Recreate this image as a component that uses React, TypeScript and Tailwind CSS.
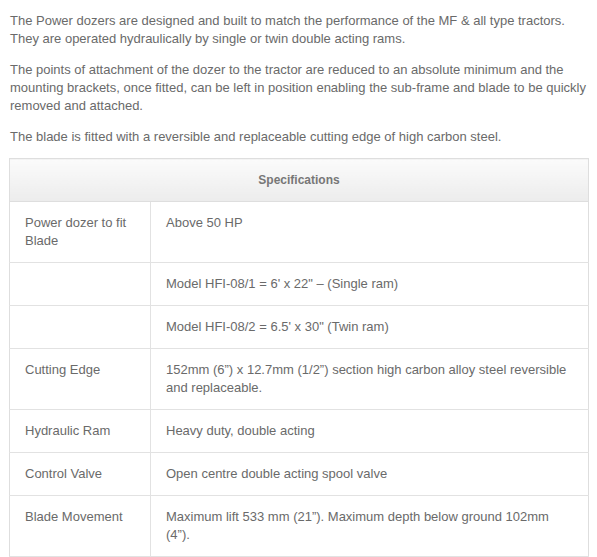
import React from 'react';

const rows: { label: string; value: string }[] = [
  { label: 'Power dozer to fit Blade', value: 'Above 50 HP' },
  { label: '', value: 'Model HFI-08/1 = 6\' x 22" \u2013 (Single ram)' },
  { label: '', value: 'Model HFI-08/2 = 6.5\' x 30" (Twin ram)' },
  {
    label: 'Cutting Edge',
    value: '152mm (6\u201d) x 12.7mm (1/2\u201d) section high carbon alloy steel reversible and replaceable.',
  },
  { label: 'Hydraulic Ram', value: 'Heavy duty, double acting' },
  { label: 'Control Valve', value: 'Open centre double acting spool valve' },
  {
    label: 'Blade Movement',
    value: 'Maximum lift 533 mm (21\u201d). Maximum depth below ground 102mm (4\u201d).',
  },
];

export default function App() {
  return (
    <div className="w-[597px] h-[557px] bg-white pl-[10px] pt-[12px] text-[13px] leading-[18px] text-[#6a6a6a] font-['Liberation_Sans',Arial,sans-serif] overflow-hidden">
      <p className="mb-[13px] pr-[4px]">
        The Power dozers are designed and built to match the performance of the MF &amp; all type tractors.
        They are operated hydraulically by single or twin double acting rams.
      </p>
      <p className="mb-[13px] pr-[4px]">
        The points of attachment of the dozer to the tractor are reduced to an absolute minimum and the
        mounting brackets, once fitted, can be left in position enabling the sub-frame and blade to be quickly
        removed and attached.
      </p>
      <p className="mb-[12px]">
        The blade is fitted with a reversible and replaceable cutting edge of high carbon steel.
      </p>

      {/* Specifications table */}
      <table className="ml-[-1px] w-[580px] border-collapse border border-[#dedede]">
        <thead>
          <tr>
            <th
              colSpan={2}
              className="py-[12px] border-b border-[#dedede] bg-gradient-to-b from-[#fbfbfb] to-[#ececec] text-[12px] font-bold text-[#777]"
            >
              Specifications
            </th>
          </tr>
        </thead>
        <tbody>
          {rows.map((r, i) => (
            <tr key={i} className="border-b border-[#e2e2e2] align-top">
              <td className="w-[141px] border-r border-[#e2e2e2] pl-[15px] pr-[10px] py-[12px]">{r.label}</td>
              <td className="pl-[15px] pr-[12px] py-[12px]">{r.value}</td>
            </tr>
          ))}
        </tbody>
      </table>
    </div>
  );
}
